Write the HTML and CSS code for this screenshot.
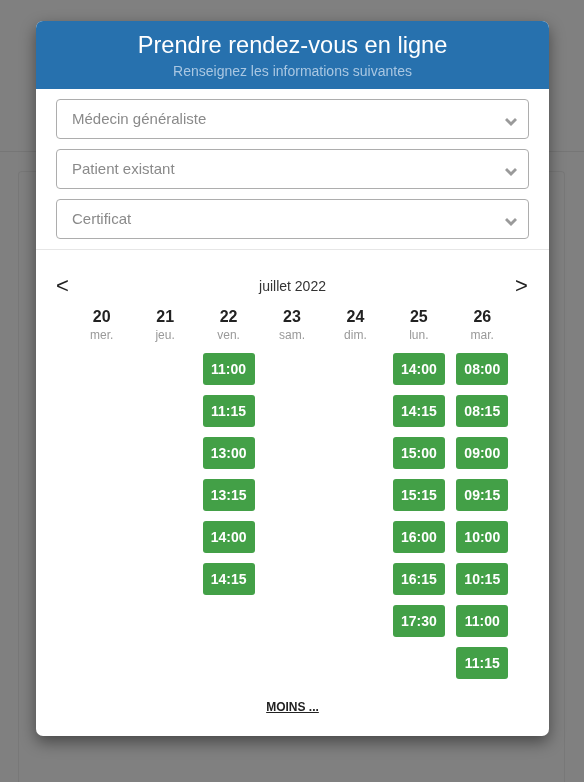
FILE: index.html
```html
<!DOCTYPE html>
<html lang="fr">
<head>
<meta charset="utf-8">
<title>Prendre rendez-vous en ligne</title>
<link rel="stylesheet" href="styles.css">
</head>
<body>
<div class="page">
  <div class="page-top"></div>
  <div class="page-card"></div>
</div>

<div class="backdrop">
  <div class="modal">
    <div class="modal-head">
      <h1 class="modal-title">Prendre rendez-vous en ligne</h1>
      <p class="modal-sub">Renseignez les informations suivantes</p>
    </div>

    <div class="fields">
      <div class="select"><span>Médecin généraliste</span><svg class="chev" viewBox="0 0 12 8"><path d="M0 2 L2 0 L6 4 L10 0 L12 2 L6 8 Z"/></svg></div>
      <div class="select"><span>Patient existant</span><svg class="chev" viewBox="0 0 12 8"><path d="M0 2 L2 0 L6 4 L10 0 L12 2 L6 8 Z"/></svg></div>
      <div class="select"><span>Certificat</span><svg class="chev" viewBox="0 0 12 8"><path d="M0 2 L2 0 L6 4 L10 0 L12 2 L6 8 Z"/></svg></div>
    </div>

    <div class="calendar">
      <div class="cal-nav">
        <span class="arrow">&lt;</span>
        <span class="month">juillet 2022</span>
        <span class="arrow">&gt;</span>
      </div>
      <div class="days">
        <div class="day">
          <div class="num">20</div><div class="wd">mer.</div>
        </div>
        <div class="day">
          <div class="num">21</div><div class="wd">jeu.</div>
        </div>
        <div class="day">
          <div class="num">22</div><div class="wd">ven.</div>
          <div class="slots">
            <a class="slot">11:00</a><a class="slot">11:15</a><a class="slot">13:00</a>
            <a class="slot">13:15</a><a class="slot">14:00</a><a class="slot">14:15</a>
          </div>
        </div>
        <div class="day">
          <div class="num">23</div><div class="wd">sam.</div>
        </div>
        <div class="day">
          <div class="num">24</div><div class="wd">dim.</div>
        </div>
        <div class="day">
          <div class="num">25</div><div class="wd">lun.</div>
          <div class="slots">
            <a class="slot">14:00</a><a class="slot">14:15</a><a class="slot">15:00</a>
            <a class="slot">15:15</a><a class="slot">16:00</a><a class="slot">16:15</a>
            <a class="slot">17:30</a>
          </div>
        </div>
        <div class="day">
          <div class="num">26</div><div class="wd">mar.</div>
          <div class="slots">
            <a class="slot">08:00</a><a class="slot">08:15</a><a class="slot">09:00</a>
            <a class="slot">09:15</a><a class="slot">10:00</a><a class="slot">10:15</a>
            <a class="slot">11:00</a><a class="slot">11:15</a>
          </div>
        </div>
      </div>
      <div class="more"><a>MOINS ...</a></div>
    </div>
  </div>
</div>
</body>
</html>
```

FILE: styles.css
```css
* { box-sizing: border-box; }

html, body {
  margin: 0;
  height: 100%;
}

body {
  background: #808080;
  font-family: "Liberation Sans", Arial, sans-serif;
  overflow: hidden;
}

/* dimmed page behind the dialog */
.page {
  height: 100%;
  display: flex;
  flex-direction: column;
}
.page-top {
  height: 152px;
  flex: none;
  border-bottom: 1px solid #767676;
}
.page-card {
  flex: 1;
  margin: 19px 19px 0 18px;
  border: 1px solid #787878;
  border-bottom: none;
  border-radius: 4px 4px 0 0;
}

.backdrop {
  position: fixed;
  inset: 0;
}

.modal {
  position: absolute;
  left: 36px;
  top: 21px;
  width: 513px;
  background: #fff;
  border-radius: 7px;
  overflow: hidden;
  box-shadow: 0 6px 16px rgba(0, 0, 0, 0.45);
}

.modal-head {
  background: #2771ae;
  text-align: center;
  padding: 11px 0 10px;
}
.modal-title {
  margin: 0;
  font-size: 23.6px;
  line-height: 27px;
  font-weight: normal;
  color: #fff;
}
.modal-sub {
  margin: 4px 0 0;
  font-size: 14px;
  line-height: 16px;
  color: #a9c7e2;
}

.fields {
  display: flex;
  flex-direction: column;
  gap: 10px;
  padding: 10px 20px 10px;
  border-bottom: 1px solid #e6e6e6;
}
.select {
  height: 40px;
  border: 1px solid #adadad;
  border-radius: 4px;
  display: flex;
  align-items: center;
  justify-content: space-between;
  padding: 0 11px 0 15px;
  font-size: 15px;
  color: #8a8a8a;
}
.select span {
  margin-top: -1px;
}
.chev {
  width: 12px;
  height: 8px;
  margin-top: 5px;
  fill: #9a9a9a;
}

.calendar {
  padding: 24px 20px 22px;
}
.cal-nav {
  display: flex;
  align-items: center;
  justify-content: space-between;
  height: 24px;
}
.arrow {
  font-size: 22px;
  line-height: 24px;
  color: #222;
  width: 14px;
}
.month {
  font-size: 14px;
  color: #333;
}

.days {
  display: grid;
  grid-template-columns: repeat(7, 1fr);
  padding: 0 15px 0 14px;
  margin-top: 9px;
}
.day {
  display: flex;
  flex-direction: column;
  align-items: center;
}
.num {
  font-size: 16px;
  line-height: 20px;
  font-weight: bold;
  color: #222;
}
.wd {
  font-size: 12px;
  line-height: 14px;
  color: #999;
  margin-top: 1px;
}
.slots {
  display: flex;
  flex-direction: column;
  gap: 10px;
  margin-top: 11px;
}
.slot {
  display: flex;
  align-items: center;
  justify-content: center;
  width: 52px;
  height: 32px;
  background: #43a047;
  color: #fff;
  font-size: 14px;
  font-weight: bold;
  border-radius: 3px;
}

.more {
  text-align: center;
  margin-top: 21px;
  font-size: 12px;
  line-height: 14px;
}
.more a {
  color: #222;
  font-weight: bold;
  text-decoration: underline;
}
```
